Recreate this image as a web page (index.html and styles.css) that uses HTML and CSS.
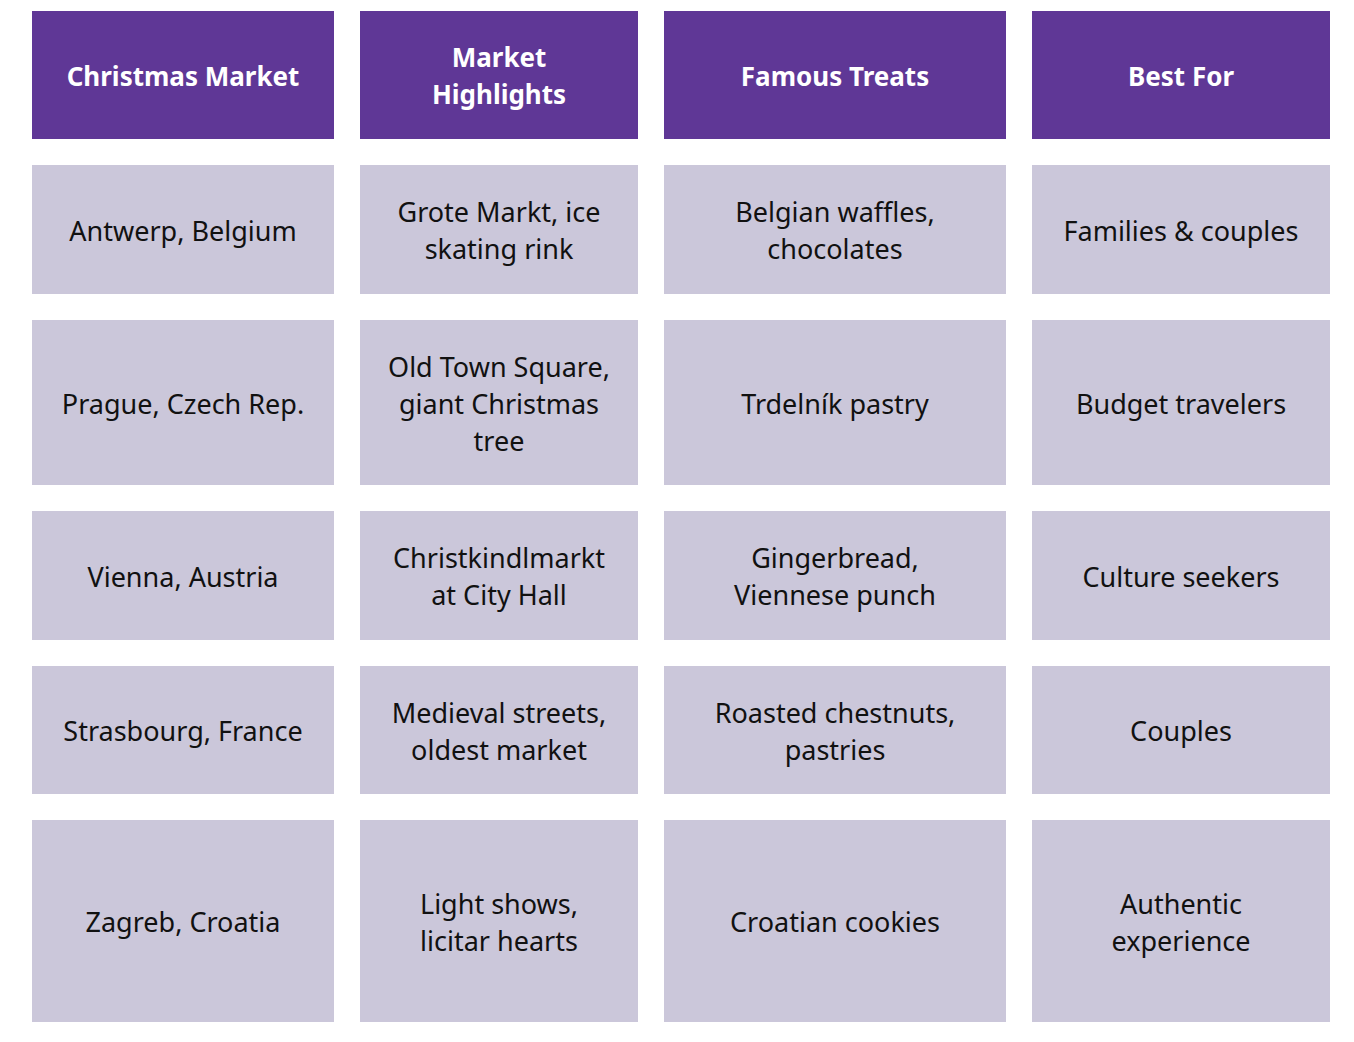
FILE: index.html
```html
<!DOCTYPE html>
<html lang="en">
<head>
<meta charset="utf-8">
<title>Christmas Markets</title>
<link rel="stylesheet" href="styles.css">
</head>
<body>
<div class="table">
  <div class="cell head">Christmas Market</div>
  <div class="cell head">Market Highlights</div>
  <div class="cell head treat">Famous Treats</div>
  <div class="cell head">Best For</div>

  <div class="cell">Antwerp, Belgium</div>
  <div class="cell">Grote Markt, ice skating rink</div>
  <div class="cell treat">Belgian waffles, chocolates</div>
  <div class="cell">Families &amp; couples</div>

  <div class="cell">Prague, Czech Rep.</div>
  <div class="cell">Old Town Square, giant Christmas tree</div>
  <div class="cell treat">Trdelník pastry</div>
  <div class="cell">Budget travelers</div>

  <div class="cell">Vienna, Austria</div>
  <div class="cell">Christkindlmarkt at City Hall</div>
  <div class="cell treat">Gingerbread, Viennese punch</div>
  <div class="cell">Culture seekers</div>

  <div class="cell">Strasbourg, France</div>
  <div class="cell">Medieval streets, oldest market</div>
  <div class="cell treat">Roasted chestnuts, pastries</div>
  <div class="cell">Couples</div>

  <div class="cell">Zagreb, Croatia</div>
  <div class="cell">Light shows, licitar hearts</div>
  <div class="cell treat">Croatian cookies</div>
  <div class="cell">Authentic experience</div>
</div>
</body>
</html>
```

FILE: styles.css
```css
html, body {
  margin: 0;
  padding: 0;
  background: #ffffff;
}

body {
  font-family: "Noto Sans", "Open Sans", "Liberation Sans", sans-serif;
}

.table {
  display: grid;
  grid-template-columns: 302px 278px 342px 298px;
  grid-template-rows: 128px 129px 165px 129px 128px 202px;
  column-gap: 26px;
  row-gap: 26px;
  padding: 11px 0 0 32px;
}

.cell {
  display: flex;
  align-items: center;
  justify-content: center;
  text-align: center;
  background: #cbc7da;
  color: #111111;
  font-size: 27px;
  line-height: 37px;
  padding: 1px 24px 0;
  box-sizing: border-box;
}

.cell.treat {
  padding: 1px 40px 0;
}

.cell.head {
  background: #5f3796;
  color: #ffffff;
  font-weight: 700;
  font-size: 26px;
  line-height: 37px;
  padding-top: 2px;
}
```
